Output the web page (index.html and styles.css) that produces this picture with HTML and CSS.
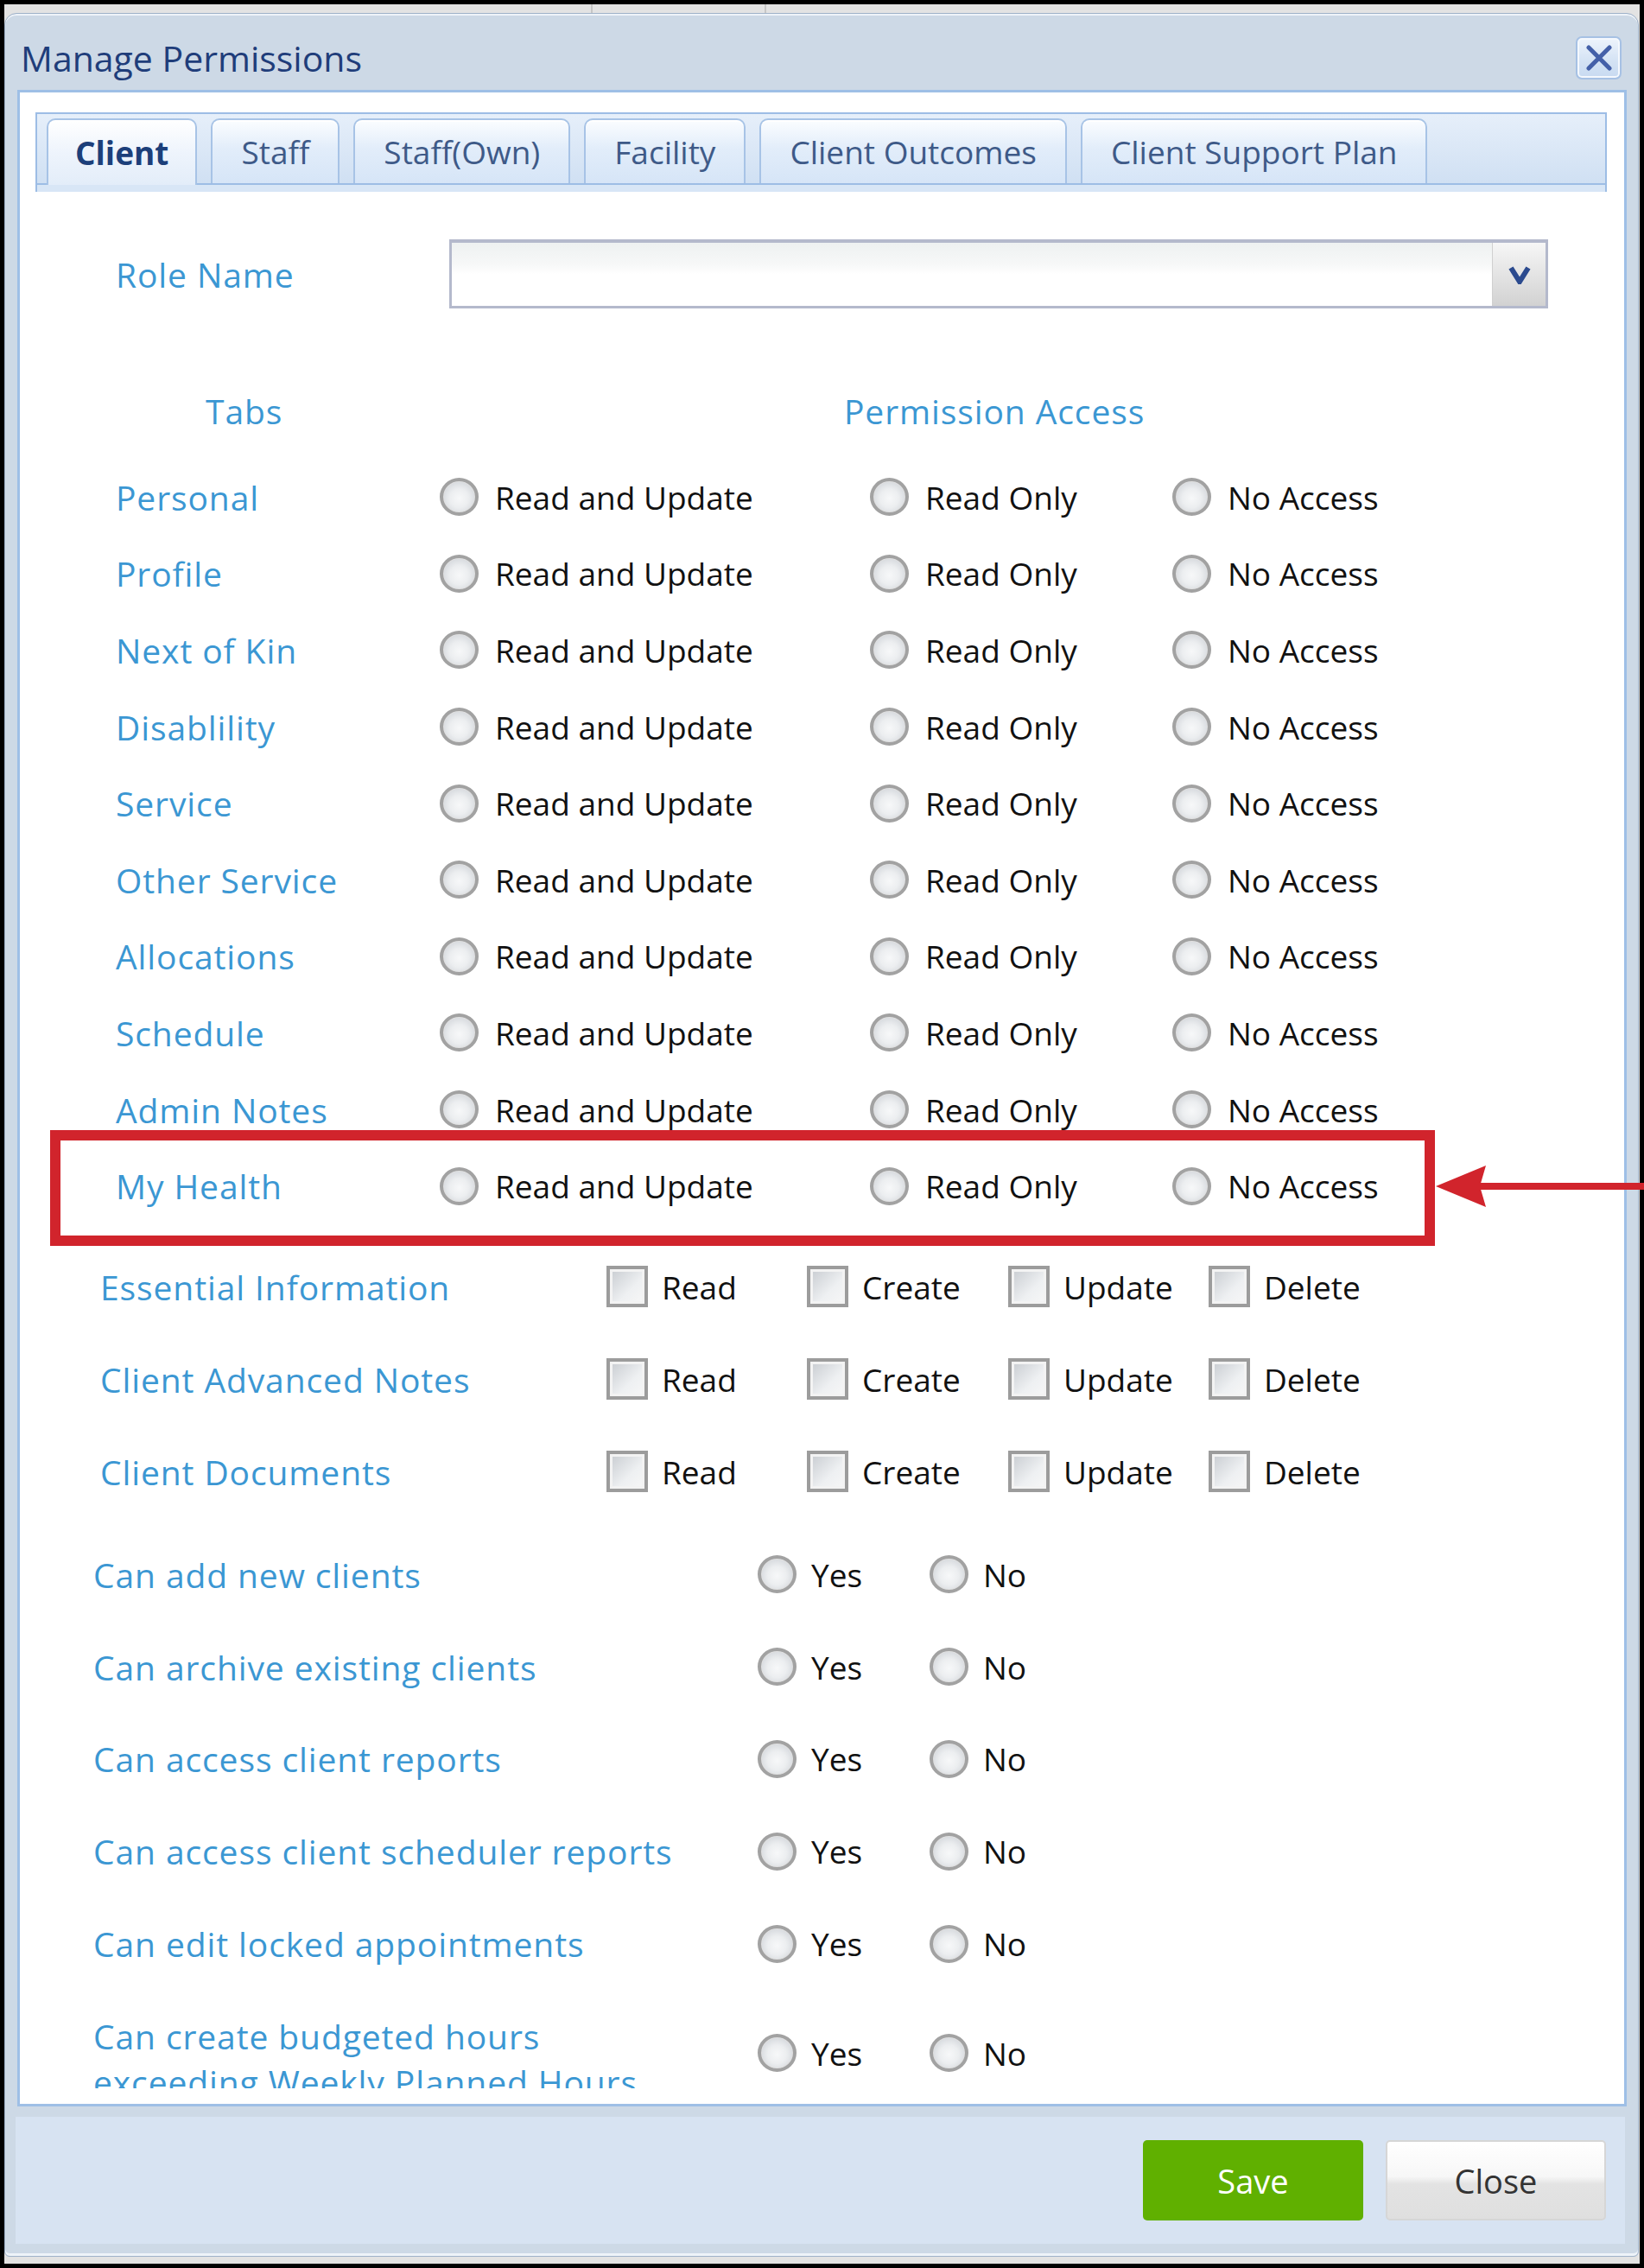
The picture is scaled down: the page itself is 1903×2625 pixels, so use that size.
FILE: index.html
```html
<!DOCTYPE html>
<html lang="en">
<head>
    <meta charset="UTF-8">
    <meta name="viewport" content="width=device-width, initial-scale=1.0">
    <title>Manage Permissions</title>
    <link rel="stylesheet" href="styles.css">
</head>
<body>
    <div class="screen">
        <div class="topstrip"><span></span><span></span></div>

        <div class="dialog">
            <div class="titlebar">
                <span class="title">Manage Permissions</span>
                <button class="close-x">
                    <svg width="30" height="30" viewBox="0 0 30 30"><path d="M3 3 L27 27 M27 3 L3 27" stroke="#4460a8" stroke-width="5" stroke-linecap="round"/></svg>
                </button>
            </div>

            <div class="panel">
                <!-- tab strip -->
                <div class="tabbar">
                    <div class="tabs">
                        <div class="tab active">Client</div>
                        <div class="tab">Staff</div>
                        <div class="tab">Staff(Own)</div>
                        <div class="tab">Facility</div>
                        <div class="tab">Client Outcomes</div>
                        <div class="tab">Client Support Plan</div>
                    </div>
                    <div class="tabbar-foot"></div>
                </div>

                <div class="content">
                    <!-- role -->
                    <div class="role-row">
                        <span class="lbl role-lbl">Role Name</span>
                        <div class="select">
                            <div class="select-btn">
                                <svg width="26" height="22" viewBox="0 0 26 22"><path d="M3 3 L13 19 L23 3" fill="none" stroke="#2b4a8e" stroke-width="6"/></svg>
                            </div>
                        </div>
                    </div>

                    <div class="col-heads">
                        <span class="lbl head-tabs">Tabs</span>
                        <span class="lbl">Permission Access</span>
                    </div>

                    <!-- tab permissions -->
                    <div class="perm-list">
                        <div class="perm-row"><span class="lbl">Personal</span><label class="opt"><span class="radio"></span>Read and Update</label><label class="opt"><span class="radio"></span>Read Only</label><label class="opt"><span class="radio"></span>No Access</label></div>
                        <div class="perm-row"><span class="lbl">Profile</span><label class="opt"><span class="radio"></span>Read and Update</label><label class="opt"><span class="radio"></span>Read Only</label><label class="opt"><span class="radio"></span>No Access</label></div>
                        <div class="perm-row"><span class="lbl">Next of Kin</span><label class="opt"><span class="radio"></span>Read and Update</label><label class="opt"><span class="radio"></span>Read Only</label><label class="opt"><span class="radio"></span>No Access</label></div>
                        <div class="perm-row"><span class="lbl">Disablility</span><label class="opt"><span class="radio"></span>Read and Update</label><label class="opt"><span class="radio"></span>Read Only</label><label class="opt"><span class="radio"></span>No Access</label></div>
                        <div class="perm-row"><span class="lbl">Service</span><label class="opt"><span class="radio"></span>Read and Update</label><label class="opt"><span class="radio"></span>Read Only</label><label class="opt"><span class="radio"></span>No Access</label></div>
                        <div class="perm-row"><span class="lbl">Other Service</span><label class="opt"><span class="radio"></span>Read and Update</label><label class="opt"><span class="radio"></span>Read Only</label><label class="opt"><span class="radio"></span>No Access</label></div>
                        <div class="perm-row"><span class="lbl">Allocations</span><label class="opt"><span class="radio"></span>Read and Update</label><label class="opt"><span class="radio"></span>Read Only</label><label class="opt"><span class="radio"></span>No Access</label></div>
                        <div class="perm-row"><span class="lbl">Schedule</span><label class="opt"><span class="radio"></span>Read and Update</label><label class="opt"><span class="radio"></span>Read Only</label><label class="opt"><span class="radio"></span>No Access</label></div>
                        <div class="perm-row"><span class="lbl">Admin Notes</span><label class="opt"><span class="radio"></span>Read and Update</label><label class="opt"><span class="radio"></span>Read Only</label><label class="opt"><span class="radio"></span>No Access</label></div>
                        <div class="perm-row"><span class="lbl">My Health</span><label class="opt"><span class="radio"></span>Read and Update</label><label class="opt"><span class="radio"></span>Read Only</label><label class="opt"><span class="radio"></span>No Access</label></div>
                    </div>

                    <!-- CRUD permissions -->
                    <div class="check-list">
                        <div class="check-row"><span class="lbl">Essential Information</span><label class="opt"><span class="check"></span>Read</label><label class="opt"><span class="check"></span>Create</label><label class="opt"><span class="check"></span>Update</label><label class="opt"><span class="check"></span>Delete</label></div>
                        <div class="check-row"><span class="lbl">Client Advanced Notes</span><label class="opt"><span class="check"></span>Read</label><label class="opt"><span class="check"></span>Create</label><label class="opt"><span class="check"></span>Update</label><label class="opt"><span class="check"></span>Delete</label></div>
                        <div class="check-row"><span class="lbl">Client Documents</span><label class="opt"><span class="check"></span>Read</label><label class="opt"><span class="check"></span>Create</label><label class="opt"><span class="check"></span>Update</label><label class="opt"><span class="check"></span>Delete</label></div>
                    </div>

                    <!-- yes / no -->
                    <div class="yn-list">
                        <div class="yn-row"><span class="lbl">Can add new clients</span><label class="opt"><span class="radio"></span>Yes</label><label class="opt"><span class="radio"></span>No</label></div>
                        <div class="yn-row"><span class="lbl">Can archive existing clients</span><label class="opt"><span class="radio"></span>Yes</label><label class="opt"><span class="radio"></span>No</label></div>
                        <div class="yn-row"><span class="lbl">Can access client reports</span><label class="opt"><span class="radio"></span>Yes</label><label class="opt"><span class="radio"></span>No</label></div>
                        <div class="yn-row"><span class="lbl">Can access client scheduler reports</span><label class="opt"><span class="radio"></span>Yes</label><label class="opt"><span class="radio"></span>No</label></div>
                        <div class="yn-row"><span class="lbl">Can edit locked appointments</span><label class="opt"><span class="radio"></span>Yes</label><label class="opt"><span class="radio"></span>No</label></div>
                        <div class="yn-row tall"><span class="lbl">Can create budgeted hours<br>exceeding Weekly Planned Hours</span><label class="opt"><span class="radio"></span>Yes</label><label class="opt"><span class="radio"></span>No</label></div>
                    </div>
                </div>
            </div>

            <div class="footer">
                <button class="btn save">Save</button>
                <button class="btn close">Close</button>
            </div>
        </div>

        <!-- annotation -->
        <div class="highlight"></div>
        <svg class="arrow" width="246" height="56" viewBox="0 0 246 56">
            <rect x="48" y="24" width="198" height="8" fill="#d1242c"/>
            <polygon points="0,28 58,4 51,28 58,52" fill="#d1242c"/>
        </svg>
    </div>
</body>
</html>
```

FILE: styles.css
```css
* {
    box-sizing: border-box;
}

body {
    margin: 0;
    background-color: #000;
    font-family: "Open Sans", "Noto Sans", sans-serif;
}

.screen {
    position: relative;
    width: 1903px;
    height: 2625px;
    border: 5px solid #000;
    background-color: #e3e3e3;
    display: flex;
    flex-direction: column;
}

.topstrip {
    height: 10px;
    flex: none;
    display: flex;
}

.topstrip span {
    width: 2px;
    background-color: #c6c6c6;
    margin-left: 679px;
}

.topstrip span + span {
    margin-left: 199px;
}

.dialog {
    flex: 1;
    margin: 0 1px 8px 0;
    display: flex;
    flex-direction: column;
    background-color: #cdd9e6;
    border: 1px solid #9fb2c9;
    border-radius: 14px 14px 6px 6px;
    box-shadow: inset 0 2px 0 #eef3f9, inset 0 -3px 0 #eef3f9;
}

.titlebar {
    height: 88px;
    flex: none;
    display: flex;
    align-items: center;
    justify-content: space-between;
    padding: 14px 19px 0 18px;
}

.title {
    font-size: 41px;
    color: #1f3d7a;
    line-height: 1;
}

.close-x {
    width: 53px;
    height: 50px;
    padding: 0;
    display: flex;
    align-items: center;
    justify-content: center;
    border: 2px solid #a6c1e4;
    border-radius: 7px;
    background: linear-gradient(#eef4fc, #d3e2f4 60%, #c8daf1);
    box-shadow: inset 0 0 0 2px #f4f8fd;
}

.panel {
    flex: none;
    height: 2334px;
    margin: 0 13px 0 14px;
    border: 3px solid #9ebfe6;
    background-color: #fff;
    overflow: hidden;
}

/* tabs */
.tabbar {
    margin: 23px 20px 0 18px;
    border: 2px solid #9dbde5;
    border-bottom: none;
    background: linear-gradient(#e6effa, #cddef2);
}

.tabs {
    display: flex;
    gap: 16px;
    padding: 5px 0 0 11px;
    border-bottom: 2px solid #9dbde5;
}

.tab {
    height: 75px;
    padding: 0 33px;
    display: flex;
    align-items: center;
    font-size: 37px;
    color: #3e5a88;
    border: 2px solid #a7c3e6;
    border-bottom: none;
    border-radius: 10px 10px 0 0;
    background: linear-gradient(#fbfdff, #e2edfa 45%, #d6e5f7);
    box-shadow: inset 0 2px 0 #fff;
}

.tab.active {
    height: 77px;
    margin-bottom: -2px;
    padding: 0 31px;
    font-weight: bold;
    color: #1c3f7a;
    background: linear-gradient(#ffffff, #eef4fc 50%, #e3edf9);
}

.tabbar-foot {
    height: 8px;
    background-color: #d8e6f6;
}

.content {
    height: 2195px;
    overflow: hidden;
}

/* labels and options */
.lbl {
    font-size: 39px;
    letter-spacing: 0.9px;
    color: #3b97d3;
}

.opt {
    display: flex;
    align-items: center;
    gap: 19px;
    font-size: 37px;
    color: #111;
}

.radio {
    width: 45px;
    height: 44px;
    flex: none;
    border-radius: 50%;
    border: 4px solid #a2a2a2;
    background: radial-gradient(circle at 50% 55%, #f7f8f9 0, #eceef0 40%, #c5c9cf 100%);
    box-shadow: inset 0 0 0 1px #e0e0e0;
}

.check {
    width: 48px;
    height: 48px;
    flex: none;
    border: 4px solid #9c9c9c;
    background: linear-gradient(135deg, #c7cbd0, #eef0f2 60%, #f7f7f7);
    box-shadow: inset 0 0 0 3px #f3f3f3;
}

.role-row {
    height: 80px;
    margin-top: 55px;
    padding-left: 111px;
    display: flex;
    align-items: center;
}

.role-lbl {
    width: 386px;
}

.select {
    width: 1272px;
    height: 80px;
    display: flex;
    justify-content: flex-end;
    border: 3px solid #b4b9cc;
    border-top-width: 4px;
    background: linear-gradient(#eef1f1, #f7f8f8 35%, #fff 50%);
}

.select-btn {
    width: 62px;
    display: flex;
    align-items: center;
    justify-content: center;
    border-left: 1px solid #d0d0d0;
    background: linear-gradient(#f6f6f6, #e6e6e6 45%, #d2d2d2);
}

.col-heads {
    height: 60px;
    margin-top: 88px;
    display: flex;
    align-items: center;
}

.head-tabs {
    margin-left: 215px;
    width: 739px;
}

.perm-list {
    margin-top: 26px;
}

.perm-row {
    height: 88.6px;
    padding-left: 111px;
    display: grid;
    grid-template-columns: 375px 498px 350px auto;
    align-items: center;
}

.check-list {
    margin-top: 19px;
}

.check-row {
    height: 107px;
    padding-left: 93px;
    display: grid;
    grid-template-columns: 586px 232px 233px 232px auto;
    align-items: center;
}

.check-row .opt {
    gap: 16px;
}

.yn-list {
    margin-top: 12px;
}

.yn-row {
    height: 106.8px;
    padding-left: 85px;
    display: grid;
    grid-template-columns: 769px 199px auto;
    align-items: center;
}

.yn-row .opt {
    gap: 17px;
}

.yn-row.tall {
    height: 106px;
    margin-top: 27px;
    align-items: start;
}

.yn-row.tall .lbl {
    line-height: 53px;
}

.yn-row.tall .opt {
    margin-top: 21px;
}

/* footer */
.footer {
    flex: 1;
    margin: 12px 15px 14px 12px;
    padding-right: 22px;
    display: flex;
    align-items: center;
    justify-content: flex-end;
    gap: 26px;
    background-color: #d7e3f2;
}

.btn {
    width: 255px;
    height: 93px;
    font-family: inherit;
    font-size: 38px;
    border-radius: 5px;
    cursor: pointer;
}

.btn.save {
    border: none;
    background-color: #60b000;
    color: #fff;
}

.btn.close {
    border: 2px solid #d6d6d6;
    color: #333;
    background: linear-gradient(#ffffff, #f7f7f7 45%, #e3e3e3 55%, #dfdfdf);
}

/* red annotation */
.highlight {
    position: absolute;
    left: 53px;
    top: 1303px;
    width: 1603px;
    height: 134px;
    border: 12px solid #d1242c;
}

.arrow {
    position: absolute;
    left: 1657px;
    top: 1340px;
}
```
